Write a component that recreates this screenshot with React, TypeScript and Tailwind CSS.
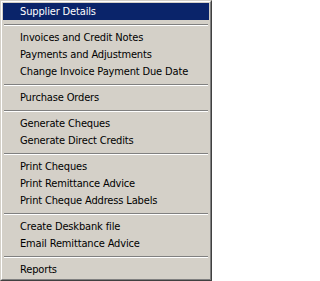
import React from 'react';

type Entry = { label: string; active?: boolean } | 'sep';

const entries: Entry[] = [
  { label: 'Supplier Details', active: true },
  'sep',
  { label: 'Invoices and Credit Notes' },
  { label: 'Payments and Adjustments' },
  { label: 'Change Invoice Payment Due Date' },
  'sep',
  { label: 'Purchase Orders' },
  'sep',
  { label: 'Generate Cheques' },
  { label: 'Generate Direct Credits' },
  'sep',
  { label: 'Print Cheques' },
  { label: 'Print Remittance Advice' },
  { label: 'Print Cheque Address Labels' },
  'sep',
  { label: 'Create Deskbank file' },
  { label: 'Email Remittance Advice' },
  'sep',
  { label: 'Reports' },
];

export default function App() {
  return (
    <div
      className="w-[212px] h-[281px] bg-[#d4d0c8] border border-t-[#d4d0c8] border-l-[#d4d0c8] border-r-[#404040] border-b-[#404040] text-[11px] leading-none tracking-[-0.15px] text-black"
      style={{ fontFamily: 'Tahoma, "DejaVu Sans Condensed", "Liberation Sans", sans-serif' }}
    >
      <div className="h-full border border-t-white border-l-white border-r-[#808080] border-b-[#808080] p-px">
        {entries.map((e, i) =>
          e === 'sep' ? (
            <div key={i} className="h-[9px] pt-[4px] px-px">
              <div className="h-[2px] border-t border-b border-t-[#808080] border-b-white" />
            </div>
          ) : (
            <div
              key={i}
              className={`h-[17px] flex items-center pl-[17px] whitespace-nowrap ${
                e.active ? 'bg-[#0a246a] text-white' : ''
              }`}
            >
              {e.label}
            </div>
          )
        )}
      </div>
    </div>
  );
}
